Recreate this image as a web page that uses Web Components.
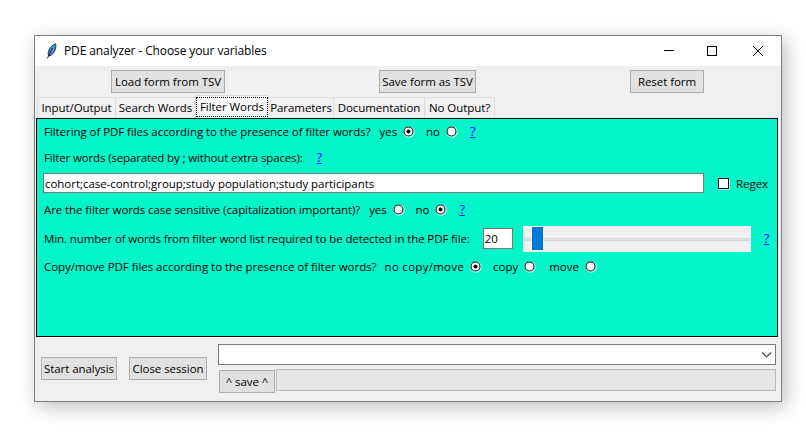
<!DOCTYPE html>
<html>
<head>
<meta charset="utf-8">
<title>PDE analyzer</title>
<style>
  html, body { margin: 0; background: #fff; }
  body { box-sizing: border-box; height: 435px; padding: 35px 0 0 34px; font: 11.5px "Open Sans", sans-serif; letter-spacing: -.06px; color: #000; }
</style>
</head>
<body>
<pde-window>
  <title-bar slot="title">PDE analyzer - Choose your variables</title-bar>
  <tool-row slot="tools">
    <tk-button style="margin-left:76px;width:114px">Load form from TSV</tk-button>
    <tk-button style="margin-left:154px;width:97px">Save form as TSV</tk-button>
    <tk-button style="margin-left:154px;width:74px">Reset form</tk-button>
  </tool-row>
  <tab-strip slot="tabs">
    <tab-item style="width:79px">Input/Output</tab-item>
    <tab-item style="width:81px">Search Words</tab-item>
    <tab-item active style="width:74px">Filter Words</tab-item>
    <tab-item style="width:66px">Parameters</tab-item>
    <tab-item style="width:92px">Documentation</tab-item>
    <tab-item style="width:71px">No Output?</tab-item>
  </tab-strip>
  <form-panel slot="panel">
    <form-row h="26" style="letter-spacing:-.06px">Filtering of PDF files according to the presence of filter words?<tk-radio label="yes" checked style="margin-left:9px"></tk-radio><tk-radio label="no" style="margin-left:11px"></tk-radio><help-link style="margin-left:12px"></help-link></form-row>
    <form-row h="26" style="letter-spacing:-.14px">Filter words (separated by ; without extra spaces):<help-link style="margin-left:14px"></help-link></form-row>
    <form-row h="26" style="letter-spacing:-.04px"><text-entry value="cohort;case-control;group;study population;study participants" style="width:661px;margin-left:-1px"></text-entry><tk-check style="margin-left:14px">Regex</tk-check></form-row>
    <form-row h="26" style="letter-spacing:-.09px">Are the filter words case sensitive (capitalization important)?<tk-radio label="yes" style="margin-left:9px"></tk-radio><tk-radio label="no" checked style="margin-left:11px"></tk-radio><help-link style="margin-left:12px"></help-link></form-row>
    <form-row h="32" style="letter-spacing:-.11px">Min. number of words from filter word list required to be detected in the PDF file:<text-entry value="20" style="width:30px;height:21px;margin-left:13px"></text-entry><tk-scale style="margin-left:10px;margin-top:2px"></tk-scale><help-link style="margin-left:13px"></help-link></form-row>
    <form-row h="24" style="letter-spacing:-.03px">Copy/move PDF files according to the presence of filter words?<tk-radio label="no copy/move" checked style="margin-left:8px;letter-spacing:.28px"></tk-radio><tk-radio label="copy" style="margin-left:11px"></tk-radio><tk-radio label="move" style="margin-left:13px"></tk-radio></form-row>
  </form-panel>
  <bottom-bar slot="bottom"></bottom-bar>
</pde-window>
<script>
// small helper, every element below sets its shadow the same way
function shadow(el, html) {
  el.attachShadow({ mode: "open" }).innerHTML = html;
}

class PdeWindow extends HTMLElement {
  constructor() {
    super();
    shadow(this, `<style>
      :host { display: flex; flex-direction: column; width: 746px; height: 365px; background: #f0f0f0;
        border: 1px solid #7d7d7d; box-shadow: 4px 5px 18px rgba(0,0,0,.26); }
    </style>
    <slot name="title"></slot><slot name="tools"></slot><slot name="tabs"></slot><slot name="panel"></slot><slot name="bottom"></slot>`);
  }
}

class TitleBar extends HTMLElement {
  constructor() {
    super();
    shadow(this, `<style>
      :host { display: flex; align-items: center; height: 30px; background: #fff; flex: none; padding-left: 11px; font-size: 12px; letter-spacing: -.11px; }
      svg.logo { width: 11px; height: 16px; margin-right: 7px; margin-top: -1px; }
      .name { flex: 1; margin-top: -2px; }
      svg.btn { width: 45px; height: 30px; display: block; }
    </style>
    <svg class="logo" viewBox="0 0 11 16">
      <path d="M2.4 12.5 C1.4 8 4 3 9.6 .8 C10.4 5 8.8 10.5 4 12.8 Z" fill="#4f8fd0" stroke="#14263a" stroke-width=".9"/>
      <path d="M1.3 15.5 L6.5 5" stroke="#14263a" stroke-width="1" fill="none"/>
    </svg>
    <span class="name"><slot></slot></span>
    <svg class="btn" viewBox="0 0 45 30"><path d="M21 14.5h10" stroke="#000"/></svg>
    <svg class="btn" viewBox="0 0 45 30"><rect x="19.5" y="10.5" width="9" height="9" fill="none" stroke="#000"/></svg>
    <svg class="btn" style="width:48px" viewBox="0 0 48 30"><path d="M20 10l10 10M30 10l-10 10" stroke="#000" fill="none"/></svg>`);
  }
}

class ToolRow extends HTMLElement {
  constructor() {
    super();
    shadow(this, `<style>:host { display: flex; height: 30px; padding-top: 4px; box-sizing: border-box; flex: none; }</style><slot></slot>`);
  }
}

class TkButton extends HTMLElement {
  constructor() {
    super();
    shadow(this, `<style>
      :host { display: flex; align-items: center; justify-content: center; box-sizing: border-box; height: 23px; padding-bottom: 1px;
        background: #e1e1e1; border: 1px solid #adadad; white-space: nowrap; flex: none; }
    </style><slot></slot>`);
  }
}

class TabStrip extends HTMLElement {
  constructor() {
    super();
    shadow(this, `<style>:host { display: flex; align-items: flex-end; height: 22px; padding-left: 3px; flex: none; }</style><slot></slot>`);
  }
}

class TabItem extends HTMLElement {
  constructor() {
    super();
    const active = this.hasAttribute("active");
    shadow(this, `<style>
      :host { display: flex; align-items: center; justify-content: center; box-sizing: border-box; flex: none; white-space: nowrap;
        height: ${active ? 23 : 21}px; background: ${active ? "#fbfbfb" : "#f0f0f0"};
        border: 1px solid #dcdcdc; border-bottom: 0; margin-left: -1px; position: relative; z-index: ${active ? 1 : 0}; }
      .t { display: block; line-height: 18px; text-align: center; ${active ? "width: 70px; outline: 1px dotted #000;" : ""} }
    </style><span class="t"><slot></slot></span>`);
  }
}

class FormPanel extends HTMLElement {
  constructor() {
    super();
    shadow(this, `<style>
      :host { display: block; box-sizing: border-box; height: 219px; margin: 0 3px 0 1px; background: #03f5c9;
        border: 1px solid #000; padding-left: 7px; flex: none; }
      .rows { margin-top: -1px; }
    </style><div class="rows"><slot></slot></div>`);
  }
}

class FormRow extends HTMLElement {
  constructor() {
    super();
    shadow(this, `<style>
      :host { display: flex; align-items: center; height: ${this.getAttribute("h")}px; white-space: nowrap; }
    </style><slot></slot>`);
  }
}

class TkRadio extends HTMLElement {
  constructor() {
    super();
    const on = this.hasAttribute("checked");
    shadow(this, `<style>
      :host { display: inline-flex; align-items: center; }
      svg { width: 12px; height: 12px; margin-left: 6px; margin-top: 1px; }
    </style>${this.getAttribute("label")}
    <svg viewBox="0 0 12 12"><circle cx="6" cy="6" r="5.8" fill="#b5fbee"/><circle cx="5.5" cy="5.5" r="4.5" fill="#fff" stroke="#111" stroke-width="1.1"/>${on ? '<circle cx="5.5" cy="5.5" r="2" fill="#000"/>' : ""}</svg>`);
  }
}

class HelpLink extends HTMLElement {
  constructor() {
    super();
    shadow(this, `<style>:host { display: inline-block; color: #00f; text-decoration: underline; font-size: 13px; line-height: 14px; }</style>?`);
  }
}

class TextEntry extends HTMLElement {
  constructor() {
    super();
    shadow(this, `<style>
      :host { display: flex; align-items: center; box-sizing: border-box; height: 20px; background: #fff;
        border: 1px solid #7a7a7a; padding-left: 1px; flex: none; }
    </style>${this.getAttribute("value")}`);
  }
}

class TkCheck extends HTMLElement {
  constructor() {
    super();
    shadow(this, `<style>
      :host { display: inline-flex; align-items: center; }
      i { box-sizing: border-box; width: 11px; height: 11px; background: #fff; border: 1px solid #111; margin-right: 7px; box-shadow: 1px 1px 0 #b5fbee; }
    </style><i></i><slot></slot>`);
  }
}

class TkScale extends HTMLElement {
  constructor() {
    super();
    shadow(this, `<style>
      :host { display: flex; align-items: center; box-sizing: border-box; width: 228px; height: 26px; background: #f0f0f0; padding: 0 1px; position: relative; flex: none; }
      .groove { flex: 1; height: 3px; background: #e3e3e3; border: 1px solid #d8d8d8; box-sizing: border-box; }
      .thumb { position: absolute; left: 9px; top: 1px; width: 11px; height: 23px; background: #0078d7; }
    </style><div class="groove"></div><div class="thumb"></div>`);
  }
}

class BottomBar extends HTMLElement {
  constructor() {
    super();
    shadow(this, `<style>
      :host { display: flex; flex: 1; padding-left: 6px; }
      .actions { display: flex; gap: 12px; padding-top: 20px; }
      .right { margin-left: 11px; padding-top: 7px; width: 558px; }
      .combo { box-sizing: border-box; height: 21px; background: #fff; border: 1px solid #7a7a7a; display: flex; justify-content: flex-end; align-items: center; padding-right: 3px; }
      .line { display: flex; margin-top: 5px; padding-left: 1px; }
      .bar { flex: 1; height: 22px; box-sizing: border-box; background: #e6e6e6; border: 1px solid #bcbcbc; margin-left: 1px; margin-top: -1px; }
      svg { width: 11px; height: 6px; }
    </style>
    <div class="actions"><tk-button style="width:76px">Start analysis</tk-button><tk-button style="width:78px">Close session</tk-button></div>
    <div class="right">
      <div class="combo"><svg viewBox="0 0 11 6"><path d="M1 .5l4.5 4.5 4.5-4.5" fill="none" stroke="#444" stroke-width="1.2"/></svg></div>
      <div class="line"><tk-button style="width:56px">^ save ^</tk-button><div class="bar"></div></div>
    </div>`);
  }
}

customElements.define("pde-window", PdeWindow);
customElements.define("title-bar", TitleBar);
customElements.define("tool-row", ToolRow);
customElements.define("tk-button", TkButton);
customElements.define("tab-strip", TabStrip);
customElements.define("tab-item", TabItem);
customElements.define("form-panel", FormPanel);
customElements.define("form-row", FormRow);
customElements.define("tk-radio", TkRadio);
customElements.define("help-link", HelpLink);
customElements.define("text-entry", TextEntry);
customElements.define("tk-check", TkCheck);
customElements.define("tk-scale", TkScale);
customElements.define("bottom-bar", BottomBar);
</script>
</body>
</html>
